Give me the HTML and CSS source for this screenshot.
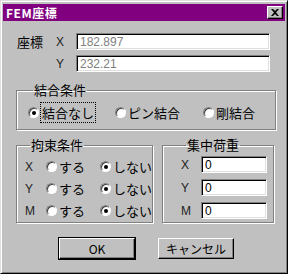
FILE: index.html
```html
<!DOCTYPE html>
<html lang="ja">
<head>
  <meta charset="UTF-8" />
  <title>FEM座標</title>
  <link rel="stylesheet" href="styles.css">
</head>
<body>
<div class="window">
  <div class="titlebar">
    <span class="title">FEM座標</span>
    <span class="close">
      <svg width="8" height="7" viewBox="0 0 8 7"><path d="M0 0h2l2 2 2-2h2L5 3.5 8 7H6L4 5 2 7H0l3-3.5z" fill="#000"/></svg>
    </span>
  </div>

  <div class="content">
    <div class="coords">
      <div class="coord-row">
        <span class="coord-name">座標</span>
        <span class="axis">X</span>
        <div class="field wide disabled">182.897</div>
      </div>
      <div class="coord-row">
        <span class="coord-name"></span>
        <span class="axis">Y</span>
        <div class="field wide disabled">232.21</div>
      </div>
    </div>

    <fieldset class="group joint">
      <legend>結合条件</legend>
      <label class="opt opt-a"><span class="radio on"></span><span class="focus">結合なし</span></label>
      <label class="opt opt-b"><span class="radio"></span>ピン結合</label>
      <label class="opt opt-c"><span class="radio"></span>剛結合</label>
    </fieldset>

    <div class="groups">
      <fieldset class="group restrain">
        <legend>拘束条件</legend>
        <div class="r-row">
          <span class="r-axis">X</span>
          <label class="opt yes"><span class="radio"></span>する</label>
          <label class="opt"><span class="radio on"></span>しない</label>
        </div>
        <div class="r-row">
          <span class="r-axis">Y</span>
          <label class="opt yes"><span class="radio"></span>する</label>
          <label class="opt"><span class="radio on"></span>しない</label>
        </div>
        <div class="r-row">
          <span class="r-axis">M</span>
          <label class="opt yes"><span class="radio"></span>する</label>
          <label class="opt"><span class="radio on"></span>しない</label>
        </div>
      </fieldset>

      <fieldset class="group load">
        <legend>集中荷重</legend>
        <div class="l-row"><span class="l-axis">X</span><div class="field small">0</div></div>
        <div class="l-row"><span class="l-axis">Y</span><div class="field small">0</div></div>
        <div class="l-row"><span class="l-axis">M</span><div class="field small">0</div></div>
      </fieldset>
    </div>

    <div class="buttons">
      <button class="btn default">OK</button>
      <button class="btn">キャンセル</button>
    </div>
  </div>
</div>
</body>
</html>
```

FILE: styles.css
```css
:root {
  --face: #c0c0c0;
  --shadow: #808080;
  --light: #dfdfdf;
  --title: #800080;
}

* { box-sizing: border-box; margin: 0; padding: 0; }

body {
  background: var(--face);
  font-family: "Liberation Sans", "Noto Sans CJK JP", sans-serif;
  font-size: 12px;
  color: #000;
}

.window {
  width: 288px;
  height: 274px;
  background: var(--face);
  border-top: 1px solid var(--light);
  border-left: 1px solid var(--light);
  border-right: 1px solid #000;
  border-bottom: 1px solid #000;
  box-shadow: inset 1px 1px 0 #fff, inset -1px -1px 0 var(--shadow);
  padding: 2px;
  display: flex;
  flex-direction: column;
}

.titlebar {
  height: 17px;
  background: var(--title);
  display: flex;
  align-items: center;
  justify-content: space-between;
  padding: 0 2px 0 3px;
  margin-top: 1px;
}

.title {
  color: #fff;
  font-weight: bold;
  font-size: 12px;
  font-family: "Noto Sans CJK JP", sans-serif;
  letter-spacing: 0.5px;
  line-height: 17px;
}

.close {
  width: 16px;
  height: 13px;
  background: var(--face);
  border-top: 1px solid #fff;
  border-left: 1px solid #fff;
  border-right: 1px solid #000;
  border-bottom: 1px solid #000;
  box-shadow: inset -1px -1px 0 var(--shadow);
  display: flex;
  align-items: center;
  justify-content: center;
  padding-bottom: 1px;
}

.content {
  flex: 1;
  padding: 12px 11px 0 10px;
  font-family: "Noto Sans CJK JP", sans-serif;
}

.coords {
  display: flex;
  flex-direction: column;
  gap: 5px;
}

.coord-row {
  display: flex;
  align-items: center;
  height: 17px;
}

.coord-name {
  width: 43px;
  padding-left: 4px;
  font-size: 13px;
}

.axis, .r-axis, .l-axis {
  font-family: "Liberation Sans", sans-serif;
  font-size: 12px;
  color: #222;
}

.axis { width: 20px; }

.field {
  height: 17px;
  background: #fff;
  border-top: 1px solid var(--shadow);
  border-left: 1px solid var(--shadow);
  border-right: 1px solid #fff;
  border-bottom: 1px solid #fff;
  box-shadow: inset 1px 1px 0 #000, inset -1px -1px 0 var(--light);
  padding: 1px 0 0 3px;
  font-family: "Liberation Sans", sans-serif;
  font-size: 12px;
  line-height: 14px;
}

.field.wide { width: 194px; }
.field.small { width: 66px; }
.field.disabled { color: var(--shadow); }

.group {
  border: 1px solid var(--shadow);
  box-shadow: 1px 1px 0 #fff, inset 1px 1px 0 #fff;
  font-size: 13px;
}

.group legend {
  padding: 0 1px;
  margin-left: 5px;
  font-size: 13px;
  line-height: 14px;
}

.joint {
  margin: 11px 0 0 3px;
  width: 260px;
  height: 47px;
  display: flex;
  align-items: center;
  padding: 0 0 1px 11px;
}

.opt {
  display: flex;
  align-items: center;
  gap: 2px;
  white-space: nowrap;
}

.opt-a { width: 87px; }
.opt-b { width: 88px; }

.focus {
  outline: 1px dotted #000;
  outline-offset: 0;
  padding: 0 1px;
}

.radio {
  width: 11px;
  height: 11px;
  border-radius: 50%;
  background: #fff;
  border: 1px solid;
  border-color: var(--shadow) #fff #fff var(--shadow);
  box-shadow: inset 1px 1px 0 #404040;
  display: inline-flex;
  align-items: center;
  justify-content: center;
  flex-shrink: 0;
}

.radio.on::after {
  content: "";
  width: 4px;
  height: 4px;
  border-radius: 50%;
  background: #000;
}

.groups {
  display: flex;
  gap: 9px;
  margin: 8px 0 0 3px;
}

.restrain {
  width: 135px;
  height: 85px;
  padding: 6px 0 0 8px;
  display: flex;
  flex-direction: column;
  gap: 5px;
}

.r-row {
  display: flex;
  align-items: center;
  height: 17px;
}

.r-axis { width: 21px; }
.opt.yes { width: 54px; }

.load {
  width: 117px;
  height: 85px;
  padding: 4px 0 0 18px;
  display: flex;
  flex-direction: column;
  gap: 6px;
}

.l-row {
  display: flex;
  align-items: center;
}

.l-axis { width: 20px; }

.buttons {
  display: flex;
  gap: 23px;
  margin: 15px 0 0 46px;
}

.btn {
  width: 76px;
  height: 21px;
  background: var(--face);
  border-top: 1px solid #fff;
  border-left: 1px solid #fff;
  border-right: 1px solid #000;
  border-bottom: 1px solid #000;
  box-shadow: inset -1px -1px 0 var(--shadow);
  font-family: "Noto Sans CJK JP", sans-serif;
  font-size: 12px;
  color: #000;
}

.btn.default {
  outline: 1px solid #000;
}
```
